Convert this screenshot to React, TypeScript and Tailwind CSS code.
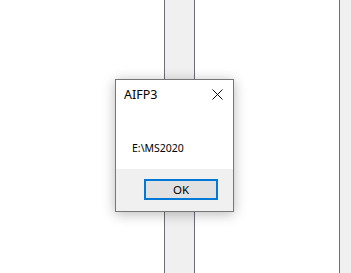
export default function App() {
  return (
    <div className="relative w-[351px] h-[273px] bg-white flex overflow-hidden font-['Noto_Sans',sans-serif]">
      <div className="w-[164px]" />
      <div className="w-[31px] h-full border-x border-[#6e6e78] bg-[#f0f0f0]" />
      <div className="flex-1" />
      <div className="w-[12px] h-full border-l border-[#6e6e78] bg-[#f0f0f0]" />

      <div className="absolute left-[115px] top-[79px] w-[119px] h-[133px] border border-[#777777] bg-white flex flex-col shadow-[0_2px_12px_rgba(0,0,0,0.28)]">
        <div className="h-[30px] flex items-start justify-between pl-[8px] pr-[10px] pt-[7px]">
          <span className="text-[12.5px] leading-[16px] text-black">AIFP3</span>
          <svg width="11" height="11" viewBox="0 0 11 11" className="mt-[2px]">
            <path d="M0.5 0.5 L10.5 10.5 M10.5 0.5 L0.5 10.5" stroke="#111" strokeWidth="1" />
          </svg>
        </div>
        <div className="flex-1 pl-[16px] pt-[24px]">
          <span className="text-[10.5px] leading-[14px] text-black">E:\MS2020</span>
        </div>
        <div className="h-[42px] bg-[#f0f0f0] flex justify-end pr-[15px] pt-[10px]">
          <button className="w-[74px] h-[21px] border-2 border-[#0078d7] bg-[#e1e1e1] text-[11.5px] leading-[16px] text-black">
            OK
          </button>
        </div>
      </div>
    </div>
  )
}
